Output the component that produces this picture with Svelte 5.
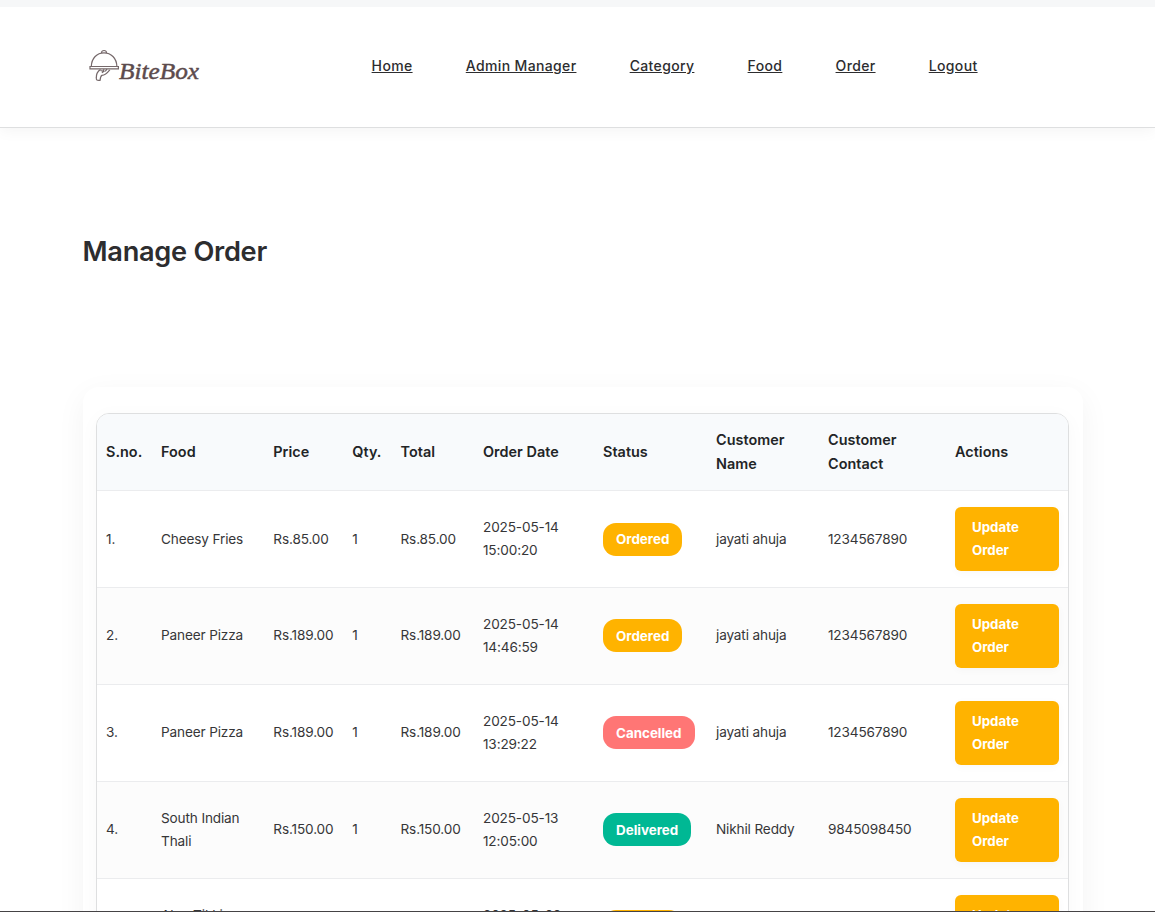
<script>
  const links = ['Home', 'Admin Manager', 'Category', 'Food', 'Order', 'Logout'];
  const columns = [
    ['S.no.', 55], ['Food', 112.3], ['Price', 79], ['Qty.', 48.2], ['Total', 82.5],
    ['Order Date', 120], ['Status', 113], ['Customer Name', 112], ['Customer Contact', 127], ['Actions', 122]
  ];
  const orders = [
    ['Cheesy Fries', 'Rs.85.00', '2025-05-14', '15:00:20', 'Ordered', 'jayati ahuja', '1234567890'],
    ['Paneer Pizza', 'Rs.189.00', '2025-05-14', '14:46:59', 'Ordered', 'jayati ahuja', '1234567890'],
    ['Paneer Pizza', 'Rs.189.00', '2025-05-14', '13:29:22', 'Cancelled', 'jayati ahuja', '1234567890'],
    ['South Indian Thali', 'Rs.150.00', '2025-05-13', '12:05:00', 'Delivered', 'Nikhil Reddy', '9845098450'],
    ['Aloo Tikki Burger', 'Rs.99.00', '2025-05-09', '14:20:36', 'Ordered', 'Nikhil Reddy', '9845098450']
  ];
</script>

<div class="page">
  <header>
    <a class="logo" href="#home" aria-label="BiteBox">
      <svg width="120" height="40" viewBox="0 0 120 40" fill="none" stroke="#75686a" stroke-width="1.2">
        <path d="M9.3 21.5C9.6 13 15 7.9 22 7.9s12.6 5.1 12.9 13.6M8 21.5h28.4v2.4H8zM19.6 7.9c-.6-3.2 5.5-3.2 4.8 0" />
        <path d="M18.5 24.5c-3 1.8-4.3 4.5-4.2 8.4-.1 2.3.5 2.7 3.8 2.4.3-2.7.4-4.2 1.8-4.9 3.8-.2 5.7-2.8 7.9-5.6M18.5 25.5l3.4.8-2 1.4M22 24.2l-.8 1.9M25 24.2l-1.8 2.1" />
        <text x="37" y="33.5" textLength="80" lengthAdjust="spacingAndGlyphs">BiteBox</text>
      </svg>
    </a>
    <nav>
      {#each links as link}
        <a href={'#' + link}>{link}</a>
      {/each}
    </nav>
  </header>
  <main>
    <h1>Manage Order</h1>
    <section class="card">
      <div class="frame">
        <table>
          <colgroup>
            {#each columns as [, width]}<col style="width: {width}px" />{/each}
          </colgroup>
          <thead>
            <tr>{#each columns as [name]}<th>{name}</th>{/each}</tr>
          </thead>
          <tbody>
            {#each orders as [food, price, date, time, status, customer, contact], i}
              <tr>
                <td class="single">{i + 1}.</td>
                <td class:single={food.length < 14}>{food}</td>
                <td class="single">{price}</td>
                <td class="single">1</td>
                <td class="single">{price}</td>
                <td>{date} {time}</td>
                <td class="single"><span class="badge {status.toLowerCase()}">{status}</span></td>
                <td class="single">{customer}</td>
                <td class="single">{contact}</td>
                <td><a class="update" href="#update">Update Order</a></td>
              </tr>
            {/each}
          </tbody>
        </table>
      </div>
    </section>
  </main>
</div>

<style>
  :global(body) { margin: 0; }
  .page {
    box-sizing: border-box;
    height: 912px;
    overflow: hidden;
    border-top: 7px solid #f6f7f8;
    border-bottom: 1px solid #454345;
    background: #fff;
    color: #2d2d2f;
    font-family: Inter, sans-serif;
  }
  header {
    box-sizing: border-box;
    height: 121px;
    padding: 38px 0 0 82px;
    border-bottom: 1px solid #dedfe0;
    box-shadow: 0 2px 15px rgba(0, 0, 0, .05);
    display: flex;
  }
  .logo { width: 120px; height: 40px; }
  .logo svg { display: block; }
  .logo text {
    font: italic 24px "Liberation Serif", serif;
    fill: #5c4b4d;
    stroke: #5c4b4d;
    stroke-width: .5;
  }
  nav {
    display: flex;
    gap: 53.2px;
    padding: 11px 0 0 169.6px;
  }
  nav a {
    color: #2d2d2f;
    font-size: 14px;
    line-height: 20px;
    font-weight: 500;
    letter-spacing: .36px;
    white-space: nowrap;
  }
  main { padding: 107px 72px 0 83px; }
  h1 {
    margin: 0 0 0 -.5px;
    font-size: 27.2px;
    line-height: 34px;
    font-weight: 560;
    letter-spacing: -.28px;
  }
  .card {
    margin-top: 118px;
    padding: 26px 14px 80px 13px;
    border-radius: 16px;
    box-shadow: 0 8px 30px rgba(0, 0, 0, .05);
  }
  .frame {
    border: 1px solid #dedfe0;
    border-radius: 13px;
    overflow: hidden;
    box-shadow: 0 4px 20px rgba(0, 0, 0, .03);
  }
  table {
    width: 971px;
    table-layout: fixed;
    border-collapse: separate;
    border-spacing: 0;
  }
  th, td {
    box-sizing: border-box;
    padding: 0 9px;
    text-align: left;
    vertical-align: middle;
    border-bottom: 1px solid #ebecee;
  }
  th {
    height: 77px;
    background: #f8fafc;
    color: #222426;
    font-size: 14.4px;
    line-height: 24px;
    font-weight: 560;
    letter-spacing: .04px;
  }
  td {
    height: 97px;
    font-size: 13.6px;
    font-weight: 370;
    letter-spacing: -.14px;
    line-height: 23px;
    color: #363638;
  }
  tbody tr:nth-child(even) { background: #fcfcfc; }
  tbody tr + tr .single { padding-bottom: 1px; }
  .badge {
    display: inline-block;
    padding: 5px 13px;
    border-radius: 13px;
    color: #fff;
    font-size: 13.4px;
    font-weight: 700;
    letter-spacing: 0;
    vertical-align: middle;
  }
  tr + tr .badge { padding: 6px 13px 4px; }
  .ordered { background: #ffb300; }
  .cancelled { background: #ff7675; }
  .delivered { background: #00b894; }
  .update {
    display: block;
    box-sizing: border-box;
    width: 104px;
    padding: 9px 17px;
    border-radius: 6px;
    background: #ffb300;
    box-shadow: 0 2px 8px rgba(0, 0, 0, .03);
    color: #fff;
    font-size: 13.3px;
    font-weight: 650;
    letter-spacing: 0;
    text-decoration: none;
  }
</style>
